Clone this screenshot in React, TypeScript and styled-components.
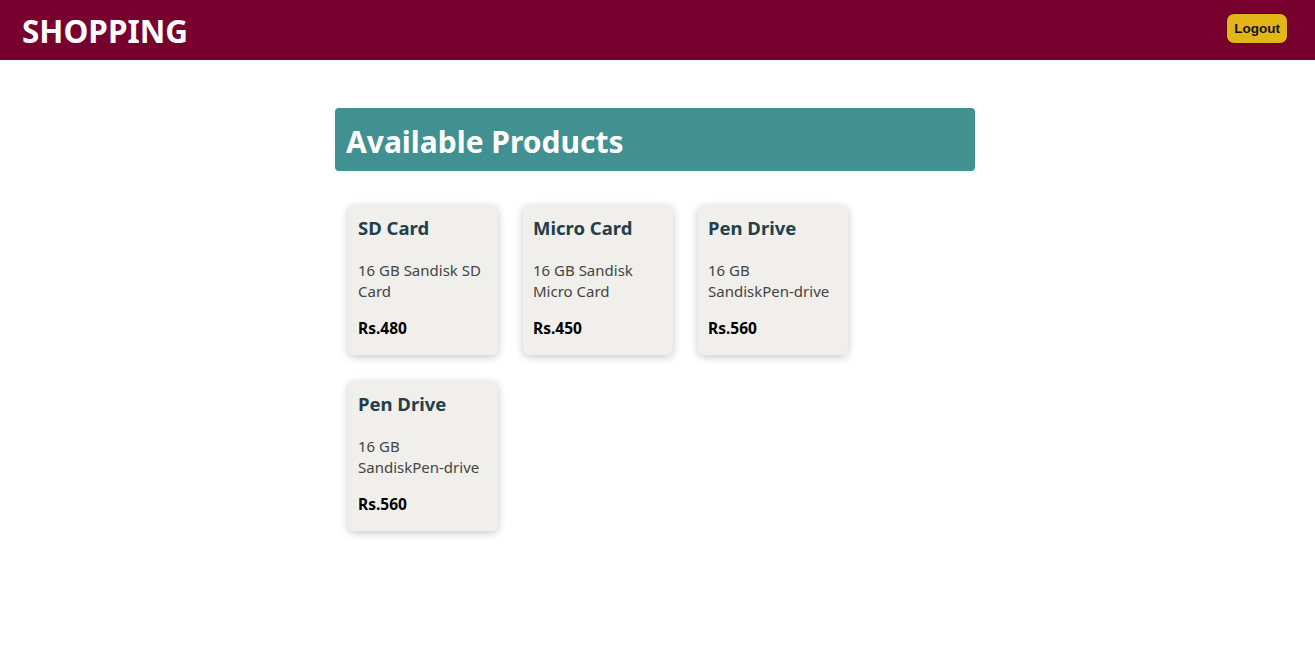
import styled, { createGlobalStyle } from 'styled-components';

const GlobalStyle = createGlobalStyle`
  body {
    margin: 0;
    font-family: 'Noto Sans', 'Open Sans', sans-serif;
    background: #fff;
  }
`;

const products = [
  { id: 1, title: 'SD Card', description: '16 GB Sandisk SD Card', price: 480 },
  { id: 2, title: 'Micro Card', description: '16 GB Sandisk Micro Card', price: 450 },
  { id: 3, title: 'Pen Drive', description: '16 GB SandiskPen-drive', price: 560 },
  { id: 4, title: 'Pen Drive', description: '16 GB SandiskPen-drive', price: 560 },
];

const Header = styled.header`
  display: flex;
  align-items: center;
  justify-content: space-between;
  height: 60px;
  padding: 0 27px 0 22px;
  background-color: #78002e;
`;

const Logo = styled.h1`
  margin: 0;
  color: #fff;
  font-size: 31.5px;
  font-weight: 700;
`;

const LogoutButton = styled.button`
  height: 31px;
  margin-bottom: 3px;
  padding: 0 7px;
  border: 1px solid #5c0022;
  border-radius: 8px;
  background-color: #e2b617;
  color: #111;
  font-family: 'Liberation Sans', Arial, sans-serif;
  font-size: 13.5px;
  font-weight: 700;
  cursor: pointer;
`;

const Main = styled.main`
  width: 640px;
  margin: 48px auto 40px;
  padding-right: 5px;
`;

const Banner = styled.div`
  box-sizing: border-box;
  height: 63px;
  display: flex;
  align-items: center;
  padding: 3px 11px 0;
  border-radius: 4px;
  background-color: #419193;
  color: #fff;
  font-size: 30px;
  font-weight: 700;
`;

const Grid = styled.ul`
  list-style: none;
  margin: 34px 0 0;
  padding: 0 0 0 13px;
  display: grid;
  grid-template-columns: repeat(3, 150px);
  column-gap: 25px;
  row-gap: 26px;
`;

const Card = styled.li`
  box-sizing: border-box;
  width: 150px;
  height: 150px;
  padding: 10px;
  border-radius: 6px;
  background-color: #f0efeb;
  box-shadow: 0 2px 8px rgba(0, 0, 0, 0.22);
`;

const Title = styled.h3`
  margin: 0;
  color: #22404b;
  font-size: 18.5px;
  font-weight: 700;
  line-height: 26px;
`;

const Description = styled.p`
  margin: 19px 0 0;
  color: #444;
  font-size: 15px;
  line-height: 21px;
`;

const Price = styled.p`
  margin: 16px 0 0;
  color: #000;
  font-size: 15.5px;
  font-weight: 700;
  line-height: 21px;
`;

export default function App() {
  return (
    <>
      <GlobalStyle />
      <Header>
        <Logo>SHOPPING</Logo>
        <LogoutButton>Logout</LogoutButton>
      </Header>
      <Main>
        <Banner>Available Products</Banner>
        <Grid>
          {products.map((p) => (
            <Card key={p.id}>
              <Title>{p.title}</Title>
              <Description>{p.description}</Description>
              <Price>Rs.{p.price}</Price>
            </Card>
          ))}
        </Grid>
      </Main>
    </>
  );
}
